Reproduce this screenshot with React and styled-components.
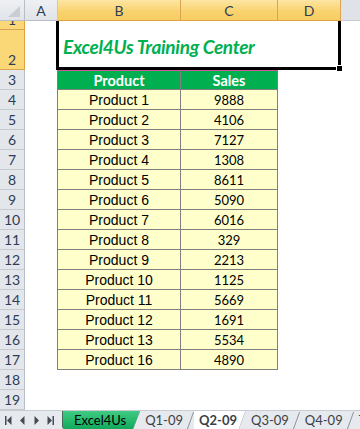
import React from "react";
import styled, { createGlobalStyle } from "styled-components";

const GlobalStyle = createGlobalStyle`
  html, body {
    margin: 0;
    padding: 0;
    background: #ffffff;
    overflow: hidden;
  }
  body {
    font-family: "Liberation Sans", Arial, sans-serif;
  }
`;

const products = [
  ["Product 1", 9888],
  ["Product 2", 4106],
  ["Product 3", 7127],
  ["Product 4", 1308],
  ["Product 5", 8611],
  ["Product 6", 5090],
  ["Product 7", 6016],
  ["Product 8", 329],
  ["Product 9", 2213],
  ["Product 10", 1125],
  ["Product 11", 5669],
  ["Product 12", 1691],
  ["Product 13", 5534],
  ["Product 16", 4890],
];

const tabs = [
  { name: "Excel4Us", kind: "green" },
  { name: "Q1-09" },
  { name: "Q2-09", kind: "active" },
  { name: "Q3-09" },
  { name: "Q4-09" },
  { name: "T" },
];

function Sheet() {
  const rowNums = Array.from({ length: 19 }, (_, i) => i + 1);
  return (
    <Wrap>
      <Grid>
        <Corner>
          <svg width="25" height="21" viewBox="0 0 25 21">
            <polygon points="8,17 20,17 20,6" fill="#c9ced5" />
          </svg>
        </Corner>
        <ColHead>A</ColHead>
        <ColHead $active>B</ColHead>
        <ColHead $active>C</ColHead>
        <ColHead $active>D</ColHead>
        <HeadFill />

        {rowNums.map((n) => (
          <RowHead key={n} $row={n + 1} $active={n <= 2}>
            <span>{n}</span>
          </RowHead>
        ))}

        <TitleBox>
          <TitleText>Excel4Us Training Center</TitleText>
          <FillHandle />
        </TitleBox>

        <Table>
          <HeadCell>Product</HeadCell>
          <HeadCell>Sales</HeadCell>
          {products.map(([name, sales]) => (
            <React.Fragment key={name}>
              <NameCell>{name}</NameCell>
              <SalesCell>{sales}</SalesCell>
            </React.Fragment>
          ))}
        </Table>
      </Grid>

      <TabBar>
        <NavGroup>
          <svg width="7" height="9" viewBox="0 0 7 9">
            <rect x="0" y="0" width="1.5" height="9" fill="#454b55" />
            <polygon points="6.5,0 2,4.5 6.5,9" fill="#454b55" />
          </svg>
          <svg width="5" height="9" viewBox="0 0 5 9">
            <polygon points="4.5,0 0,4.5 4.5,9" fill="#454b55" />
          </svg>
          <svg width="5" height="9" viewBox="0 0 5 9">
            <polygon points="0.5,0 5,4.5 0.5,9" fill="#454b55" />
          </svg>
          <svg width="7" height="9" viewBox="0 0 7 9">
            <polygon points="0.5,0 5,4.5 0.5,9" fill="#454b55" />
            <rect x="5.5" y="0" width="1.5" height="9" fill="#454b55" />
          </svg>
        </NavGroup>
        <Tabs>
          {tabs.map((t) => (
            <Tab key={t.name} $kind={t.kind}>
              {t.name}
            </Tab>
          ))}
        </Tabs>
      </TabBar>
    </Wrap>
  );
}

const Wrap = styled.div`
  width: 360px;
  height: 429px;
  display: flex;
  flex-direction: column;
  overflow: hidden;
  background: #ffffff;
`;

const Grid = styled.div`
  display: grid;
  grid-template-columns: 25px 33px 123px 97px 63px 1fr;
  grid-template-rows: 21px 9px 40px repeat(17, 20px);
  height: 410px;
  flex-shrink: 0;
`;

const headFont = `
  font-family: Lato, "Open Sans", sans-serif;
  font-size: 14px;
  color: #2e3d55;
`;

const Corner = styled.div`
  grid-column: 1;
  grid-row: 1;
  background: linear-gradient(#eef0f3, #e1e4e8);
  border-right: 1px solid #b8bec7;
  border-bottom: 1px solid #b8bec7;
  box-sizing: border-box;
  svg {
    display: block;
  }
`;

const ColHead = styled.div`
  ${headFont}
  box-sizing: border-box;
  display: flex;
  align-items: center;
  justify-content: center;
  grid-row: 1;
  background: ${(p) =>
    p.$active
      ? "linear-gradient(#fce6a4, #f9d36f 55%, #f7cd62)"
      : "linear-gradient(#eef0f3, #e1e4e8)"};
  border-right: 1px solid ${(p) => (p.$active ? "#d9a453" : "#c3c8cf")};
  border-bottom: 1px solid ${(p) => (p.$active ? "#e0a23c" : "#b8bec7")};
`;

const HeadFill = styled.div`
  grid-row: 1;
  grid-column: 6;
  background: #dfe2e7;
  border-bottom: 1px solid #c8ccd2;
`;

const RowHead = styled.div`
  ${headFont}
  grid-column: 1;
  grid-row: ${(p) => p.$row};
  box-sizing: border-box;
  display: flex;
  align-items: flex-end;
  justify-content: center;
  overflow: hidden;
  padding-bottom: 1px;
  line-height: 17px;
  background: ${(p) => (p.$active ? "#fad878" : "#e3e6eb")};
  border-right: 1px solid ${(p) => (p.$active ? "#e0a23c" : "#b8bec7")};
  border-bottom: 1px solid ${(p) => (p.$active ? "#d9a453" : "#c6cbd2")};
`;

const TitleBox = styled.div`
  position: relative;
  grid-column: 3 / 6;
  grid-row: 2 / 4;
  margin-left: -2px;
  box-sizing: border-box;
  border: 3px solid #000000;
  border-top: none;
  display: flex;
  align-items: center;
  padding: 4px 0 0 4px;
`;

const TitleText = styled.span`
  font-family: Lato, "Open Sans", sans-serif;
  font-weight: 700;
  font-style: italic;
  font-size: 19px;
  letter-spacing: -0.3px;
  color: #00b050;
  white-space: nowrap;
`;

const FillHandle = styled.span`
  position: absolute;
  right: -5px;
  bottom: -5px;
  width: 5px;
  height: 5px;
  background: #000000;
  border: 1px solid #ffffff;
`;

const Table = styled.div`
  grid-column: 3 / 5;
  grid-row: 4 / 19;
  margin-left: -1px;
  display: grid;
  grid-template-columns: 1fr 97px;
  grid-auto-rows: 20px;
  border-left: 1px solid #808080;
`;

const Cell = styled.div`
  box-sizing: border-box;
  display: flex;
  align-items: center;
  justify-content: center;
  border-right: 1px solid #808080;
  border-bottom: 1px solid #808080;
  background: #ffffcc;
  color: #000000;
`;

const HeadCell = styled(Cell)`
  background: #00b050;
  border-top: 1px solid #d4549a;
  color: #ffffff;
  font-family: Lato, "Open Sans", sans-serif;
  font-weight: 700;
  font-size: 14.5px;
`;

const NameCell = styled(Cell)`
  font-family: "Liberation Sans", Arial, sans-serif;
  font-size: 14px;
  padding-top: 1px;
`;

const SalesCell = styled(Cell)`
  font-family: Lato, "Open Sans", sans-serif;
  font-size: 13px;
  padding-top: 1px;
`;

const TabBar = styled.div`
  height: 19px;
  display: flex;
  align-items: stretch;
  background: #e6e9ed;
  border-top: 1px solid #c9cdd3;
  box-sizing: border-box;
  overflow: hidden;
`;

const NavGroup = styled.div`
  width: 60px;
  flex-shrink: 0;
  display: flex;
  align-items: center;
  justify-content: space-between;
  padding: 0 6px 0 5px;
  box-sizing: border-box;
  svg {
    display: block;
  }
`;

const Tabs = styled.div`
  display: flex;
  align-items: stretch;
  margin-left: 2px;
`;

const tabPadding = {
  green: "0 14px 0 11px",
  active: "0 9px 0 5px",
};

const Tab = styled.div`
  position: relative;
  flex-shrink: 0;
  white-space: nowrap;
  display: flex;
  align-items: center;
  font-family: Lato, "Open Sans", sans-serif;
  font-size: 13px;
  font-weight: ${(p) => (p.$kind === "active" ? 700 : 400)};
  color: ${(p) => (p.$kind === "green" ? "#000000" : "#3a3f47")};
  padding: ${(p) => tabPadding[p.$kind] || "0 11px 0 5px"};
  margin-top: ${(p) => (p.$kind === "active" ? "-1px" : "0")};
  background: ${(p) =>
    p.$kind === "green"
      ? "linear-gradient(#3fcb83, #12a95c)"
      : p.$kind === "active"
      ? "#ffffff"
      : "transparent"};
  border-left: ${(p) => (p.$kind === "green" ? "1px solid #4a6b57" : "none")};
  border-radius: ${(p) => (p.$kind === "green" ? "0 0 0 3px" : "0")};
  clip-path: ${(p) =>
    p.$kind ? "polygon(0 0, 100% 0, calc(100% - 7px) 100%, 0 100%)" : "none"};
  &::after {
    content: "";
    position: absolute;
    right: 3px;
    top: 1px;
    bottom: 0;
    width: 1px;
    background: #8e949c;
    transform: skewX(-20deg);
  }
`;

export default function App() {
  return (
    <>
      <GlobalStyle />
      <Sheet />
    </>
  );
}
